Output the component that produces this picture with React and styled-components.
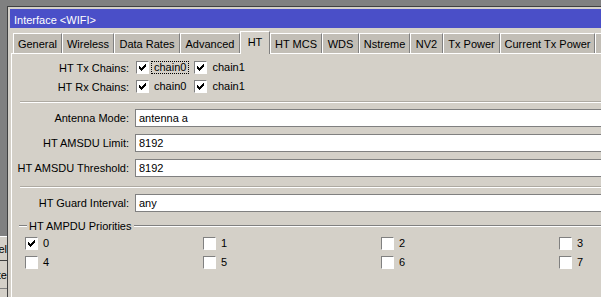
import React from 'react';
import styled, { createGlobalStyle } from 'styled-components';

const Global = createGlobalStyle`
  html, body { margin: 0; padding: 0; }
  body {
    background: #808080;
    font-family: "Liberation Sans", Arial, sans-serif;
    font-size: 11px;
    color: #000;
    overflow: hidden;
  }
`;

const Desktop = styled.div`
  position: relative;
  width: 601px;
  height: 297px;
  overflow: hidden;
  background: #808080;
`;

const BackWindow = styled.div`
  position: absolute;
  left: -60px;
  top: 236px;
  width: 80px;
  height: 70px;
  background: #d4d0c8;
  border-top: 1px solid #ffffff;
  display: flex;
  flex-direction: column;
`;

const BackRow = styled.div`
  box-sizing: border-box;
  height: ${(p) => p.$h}px;
  display: flex;
  align-items: center;
  justify-content: flex-end;
  padding-right: 13px;
  border-bottom: 1px solid ${(p) => p.$line};
  white-space: nowrap;
`;

const Window = styled.div`
  position: absolute;
  left: 7px;
  top: 6px;
  width: 660px;
  height: 310px;
  box-sizing: border-box;
  background: #d4d0c8;
  border-top: 1px solid #404040;
  border-left: 1px solid #404040;
  padding: 2px 0 0 2px;
  display: flex;
  flex-direction: column;
`;

const TitleBar = styled.div`
  box-sizing: border-box;
  height: 19px;
  background: #4a4fc8;
  color: #ffffff;
  display: flex;
  align-items: center;
  padding: 2px 0 0 4px;
  white-space: nowrap;
`;

const TabStrip = styled.div`
  display: flex;
  align-items: flex-end;
  height: 22px;
  margin-top: 3px;
  padding-left: 3px;
  position: relative;
  z-index: 2;
`;

const Tab = styled.div`
  box-sizing: border-box;
  flex-shrink: 0;
  width: ${(p) => p.$w}px;
  height: ${(p) => (p.$active ? 23 : 20)}px;
  margin-bottom: ${(p) => (p.$active ? -1 : 0)}px;
  padding-bottom: ${(p) => (p.$active ? 3 : 0)}px;
  background: ${(p) => (p.$active ? '#d4d0c8' : '#c2beb6')};
  border-top: 1px solid #ffffff;
  border-left: 1px solid #ffffff;
  border-right: 1px solid #808080;
  display: flex;
  align-items: center;
  justify-content: center;
  white-space: nowrap;
  position: relative;
  z-index: ${(p) => (p.$active ? 2 : 1)};
`;

const Panel = styled.div`
  flex: 1;
  margin-left: 1px;
  border-top: 1px solid #ffffff;
  border-left: 1px solid #ffffff;
  background: #d4d0c8;
  display: flex;
  flex-direction: column;
  padding-top: 4px;
`;

const Row = styled.div`
  display: grid;
  grid-template-columns: 117px 1fr;
  column-gap: 6px;
  align-items: center;
  height: ${(p) => p.$h}px;
  margin-top: ${(p) => p.$mt || 0}px;
`;

const Label = styled.div`
  text-align: right;
  white-space: nowrap;
`;

const Field = styled.div`
  box-sizing: border-box;
  height: 18px;
  background: #ffffff;
  border: 1px solid #808080;
  padding-left: 3px;
  display: flex;
  align-items: center;
  white-space: nowrap;
`;

const Separator = styled.div`
  margin: ${(p) => p.$mt}px 0 0 8px;
  border-top: 1px solid #aeaaa2;
  border-bottom: 1px solid #ffffff;
`;

const ChainList = styled.div`
  display: flex;
  align-items: center;
  gap: 5px;
  margin-left: 1px;
`;

const CheckItem = styled.span`
  display: inline-flex;
  align-items: center;
  white-space: nowrap;
`;

const Box = styled.span`
  box-sizing: border-box;
  flex-shrink: 0;
  width: 13px;
  height: 13px;
  background: #ffffff;
  border-top: 1px solid #808080;
  border-left: 1px solid #808080;
  border-right: 1px solid #ffffff;
  border-bottom: 1px solid #ffffff;
  display: inline-flex;
`;

const CheckLabel = styled.span`
  margin-left: 2px;
  padding: 0 2px;
  line-height: 11px;
  border: 1px dotted ${(p) => (p.$focus ? '#000000' : 'transparent')};
`;

const GroupHeader = styled.div`
  display: flex;
  align-items: center;
  height: 13px;
  margin-top: 7px;
  padding-left: 7px;
`;

const GroupLine = styled.span`
  flex: ${(p) => (p.$grow ? 1 : 'none')};
  width: ${(p) => (p.$grow ? 'auto' : '8px')};
  border-top: 1px solid #808080;
  border-bottom: 1px solid #ffffff;
`;

const GroupTitle = styled.span`
  padding: 0 3px 0 2px;
  white-space: nowrap;
`;

const CheckGrid = styled.div`
  display: grid;
  grid-template-columns: repeat(4, 178px);
  row-gap: 6px;
  margin-top: 5px;
  padding-left: 13px;
`;

const CheckMark = () => (
  <svg width="11" height="11" viewBox="0 0 11 11" shapeRendering="crispEdges">
    <path
      fill="#000"
      d="M8 2h1v1h-1z M7 3h2v1h-2z M2 4h1v1h-1z M6 4h3v1h-3z M2 5h2v1h-2z M5 5h3v1h-3z M2 6h5v1h-5z M3 7h3v1h-3z M4 8h1v1h-1z"
    />
  </svg>
);

const Check = ({ checked, label, focus }) => (
  <CheckItem>
    <Box>{checked && <CheckMark />}</Box>
    <CheckLabel $focus={focus}>{label}</CheckLabel>
  </CheckItem>
);

const tabs = [
  ['General', 49],
  ['Wireless', 52],
  ['Data Rates', 66],
  ['Advanced', 60],
  ['HT', 30, true],
  ['HT MCS', 52],
  ['WDS', 37],
  ['Nstreme', 51],
  ['NV2', 33],
  ['Tx Power', 57],
  ['Current Tx Power', 95],
  ['Status', 50],
];

const priorities = [0, 1, 2, 3, 4, 5, 6, 7];

export default function App() {
  return (
    <Desktop>
      <Global />
      <BackWindow>
        <BackRow $h={24} $line="#404040">Channel</BackRow>
        <BackRow $h={28} $line="#808080">Rate</BackRow>
      </BackWindow>
      <Window>
        <TitleBar>Interface &lt;WIFI&gt;</TitleBar>
        <TabStrip>
          {tabs.map(([name, w, active]) => (
            <Tab key={name} $w={w} $active={active}>
              {name}
            </Tab>
          ))}
        </TabStrip>
        <Panel>
          <Row $h={19}>
            <Label>HT Tx Chains:</Label>
            <ChainList>
              <Check checked label="chain0" focus />
              <Check checked label="chain1" />
            </ChainList>
          </Row>
          <Row $h={19}>
            <Label>HT Rx Chains:</Label>
            <ChainList>
              <Check checked label="chain0" />
              <Check checked label="chain1" />
            </ChainList>
          </Row>
          <Separator $mt={5} />
          <Row $h={18} $mt={6}>
            <Label>Antenna Mode:</Label>
            <Field>antenna a</Field>
          </Row>
          <Row $h={18} $mt={7}>
            <Label>HT AMSDU Limit:</Label>
            <Field>8192</Field>
          </Row>
          <Row $h={18} $mt={7}>
            <Label>HT AMSDU Threshold:</Label>
            <Field>8192</Field>
          </Row>
          <Separator $mt={9} />
          <Row $h={18} $mt={6}>
            <Label>HT Guard Interval:</Label>
            <Field>any</Field>
          </Row>
          <GroupHeader>
            <GroupLine />
            <GroupTitle>HT AMPDU Priorities</GroupTitle>
            <GroupLine $grow />
          </GroupHeader>
          <CheckGrid>
            {priorities.map((n) => (
              <Check key={n} checked={n === 0} label={String(n)} />
            ))}
          </CheckGrid>
        </Panel>
      </Window>
    </Desktop>
  );
}
